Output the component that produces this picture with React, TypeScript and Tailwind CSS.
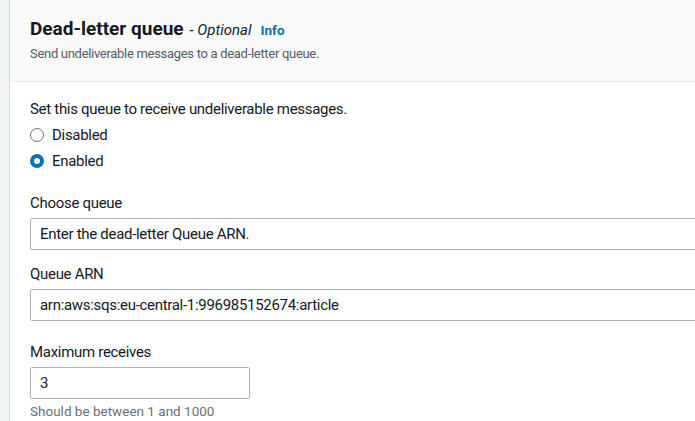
export default function App() {
  return (
    <div className="h-[421px] w-[695px] overflow-hidden bg-[#f2f3f3] pl-[9px] font-['Roboto',sans-serif] text-[#16191f]">
      <div className="h-full w-[720px] border-l border-[#d5dbdb] bg-white">
        <div className="h-[82px] border-b border-[#eaeded] bg-[#fafafa] pl-[20px] pt-[16px]">
          <div className="flex items-baseline">
            <h2 className="text-[19px] font-bold leading-[26px]">Dead-letter queue</h2>
            <span className="ml-[6px] text-[15px] italic">- Optional</span>
            <span className="ml-[9px] text-[13.5px] font-bold text-[#0073bb]">Info</span>
          </div>
          <p className="mt-[2px] text-[13px] leading-[20px] tracking-[-0.3px] text-[#545b64]">
            Send undeliverable messages to a dead-letter queue.
          </p>
        </div>
        <div className="pl-[20px] pt-[16px] text-[15px] tracking-[-0.3px]">
          <p className="leading-[22px]">Set this queue to receive undeliverable messages.</p>
          <div className="mt-[4px] flex flex-col gap-[4px]">
            <label className="flex h-[22px] items-center gap-[8px]">
              <span className="h-[14px] w-[14px] rounded-full border-[1.5px] border-[#687078] bg-white" />
              Disabled
            </label>
            <label className="flex h-[22px] items-center gap-[8px]">
              <span className="flex h-[14px] w-[14px] items-center justify-center rounded-full bg-[#0073bb]">
                <span className="h-[6px] w-[6px] rounded-full bg-white" />
              </span>
              Enabled
            </label>
          </div>
          <div className="mt-[20px]">
            <p className="leading-[22px]">Choose queue</p>
            <div className="mt-[4px] flex h-[32px] w-[700px] items-center rounded-[2px] border border-[#aab7b8] px-[9px]">
              Enter the dead-letter Queue ARN.
            </div>
          </div>
          <div className="mt-[13px]">
            <p className="leading-[22px]">Queue ARN</p>
            <div className="mt-[4px] flex h-[32px] w-[700px] items-center rounded-[2px] border border-[#aab7b8] px-[9px]">
              arn:aws:sqs:eu-central-1:996985152674:article
            </div>
          </div>
          <div className="mt-[20px]">
            <p className="leading-[22px]">Maximum receives</p>
            <div className="mt-[4px] flex h-[32px] w-[220px] items-center rounded-[2px] border border-[#aab7b8] px-[9px]">
              3
            </div>
            <p className="mt-[3px] text-[13.5px] leading-[18px] tracking-normal text-[#687078]">Should be between 1 and 1000</p>
          </div>
        </div>
      </div>
    </div>
  );
}
